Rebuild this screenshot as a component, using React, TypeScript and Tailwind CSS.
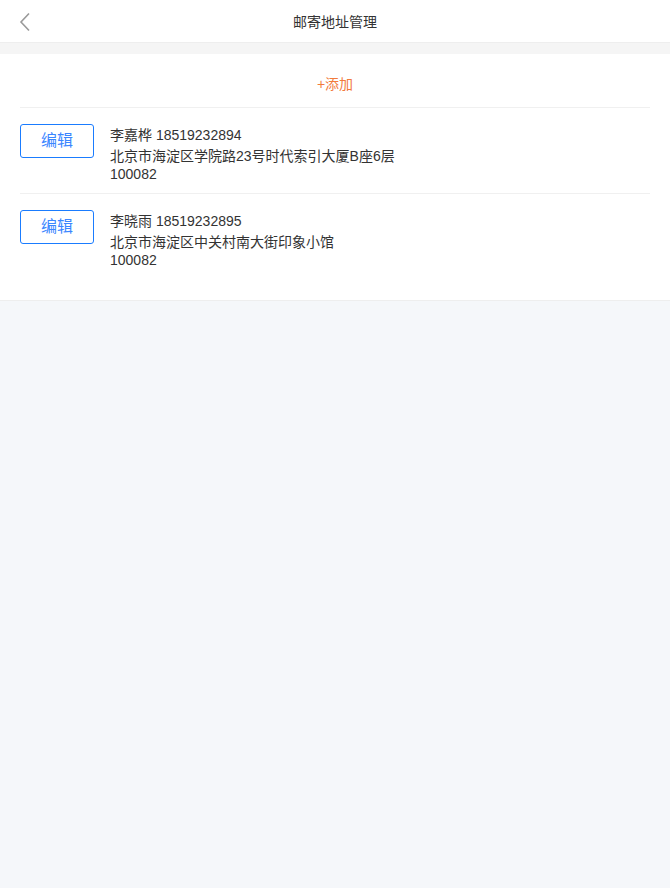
const addresses = [
  { name: '李嘉桦', phone: '18519232894', addr: '北京市海淀区学院路23号时代索引大厦B座6层', zip: '100082' },
  { name: '李晓雨', phone: '18519232895', addr: '北京市海淀区中关村南大街印象小馆', zip: '100082' },
];

export default function App() {
  return (
    <div
      className="min-h-[888px] bg-[#f5f7fa] text-[#333]"
      style={{ fontFamily: '"Liberation Sans", "Noto Sans CJK SC", sans-serif' }}
    >
      <header className="relative h-[43px] bg-white border-b border-[#eeeeee] flex items-center justify-center">
        <button className="absolute left-[14px] top-[8px] p-1 text-[#999]">
          <svg width="14" height="20" viewBox="0 0 14 20" fill="none">
            <path d="M11 1.5 L3 10 L11 18.5" stroke="#9a9a9a" strokeWidth="1.6" />
          </svg>
        </button>
        <h1 className="pt-[2px] text-[14px] text-[#333]">邮寄地址管理</h1>
      </header>
      <div className="h-[11px] bg-[#f5f5f5]" />
      <div className="bg-white px-5 pb-5 border-b border-[#eeeeee]">
        <div className="h-[54px] pt-[8px] flex items-center justify-center border-b border-[#f0f0f0]">
          <span className="text-[14px] text-[#f27b3c]">+添加</span>
        </div>
        {addresses.map((a, i) => (
          <div
            key={a.phone}
            className={`flex gap-4 pt-4 h-[86px] ${i < addresses.length - 1 ? 'border-b border-[#f0f0f0]' : ''}`}
          >
            <button className="w-[74px] h-[34px] shrink-0 rounded-[3px] border border-[#1a7cff] text-[16px] text-[#3b86ff]">
              编辑
            </button>
            <div className="pt-[2px] text-[14px] leading-[18px]">
              <p className="mb-[3px]">
                {a.name} {a.phone}
              </p>
              <p>{a.addr}</p>
              <p>{a.zip}</p>
            </div>
          </div>
        ))}
      </div>
    </div>
  );
}
